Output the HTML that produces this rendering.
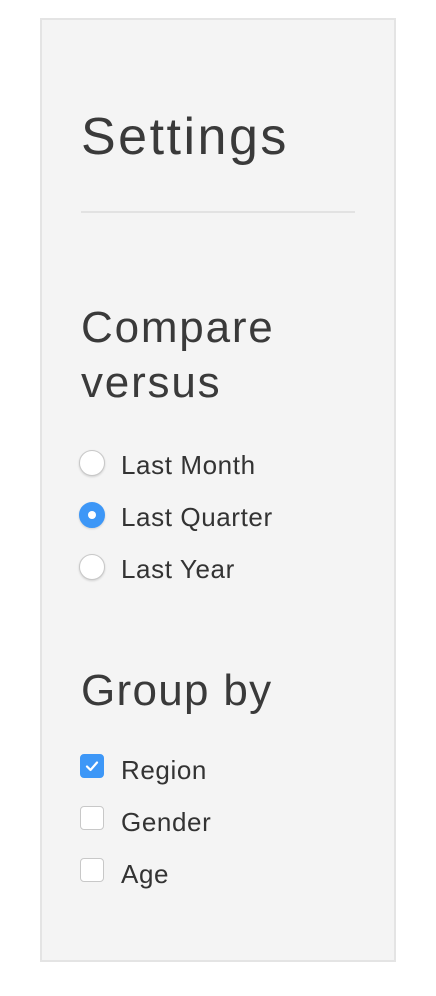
<!DOCTYPE html>
<html><head><style>
body{margin:0;width:436px;height:996px;background:#fff;font-family:"Liberation Sans",sans-serif;color:#333;position:relative;overflow:hidden}
.panel{position:absolute;left:40px;top:18px;width:352px;height:940px;background:#f4f4f4;border:2px solid #e4e4e4}
.t{position:absolute;white-space:nowrap;font-weight:300;line-height:1;color:#3a3a3a}
.hr{position:absolute;left:81px;top:211px;width:274px;height:2px;background:#e2e2e2}
.r{position:absolute;left:79px;width:24px;height:24px;border-radius:50%;background:#fff;border:1px solid #c8c8c8;box-shadow:0 1px 2px rgba(0,0,0,.15)}
.r.on{background:#3d97f7;border-color:#3d97f7}
.r.on:after{content:"";position:absolute;left:8px;top:8px;width:8px;height:8px;border-radius:50%;background:#fff}
.c{position:absolute;left:80px;width:22px;height:22px;border-radius:4px;background:#fff;border:1px solid #c8c8c8}
.c.on{background:#3d97f7;border-color:#3d97f7}
.l{position:absolute;left:121px;font-size:26px;letter-spacing:0.6px;line-height:1;color:#333;white-space:nowrap}
</style></head><body>
<div class="panel"></div>
<div class="t" style="left:81px;top:111px;font-size:52px;letter-spacing:2.5px">Settings</div>
<div class="hr"></div>
<div class="t" style="left:81px;top:306px;font-size:44px;letter-spacing:1.8px">Compare</div>
<div class="t" style="left:81px;top:361px;font-size:44px;letter-spacing:1.8px">versus</div>
<div class="r" style="top:450px"></div><div class="l" style="top:452px">Last Month</div>
<div class="r on" style="top:502px"></div><div class="l" style="top:504px">Last Quarter</div>
<div class="r" style="top:554px"></div><div class="l" style="top:556px">Last Year</div>
<div class="t" style="left:81px;top:669px;font-size:44px;letter-spacing:1.3px">Group by</div>
<div class="c on" style="top:754px"><svg width="22" height="22" viewBox="0 0 22 22"><path d="M6 11.5l3.5 3.5L16 7.5" fill="none" stroke="#fff" stroke-width="2.2" stroke-linecap="round" stroke-linejoin="round"/></svg></div><div class="l" style="top:757px">Region</div>
<div class="c" style="top:806px"></div><div class="l" style="top:809px">Gender</div>
<div class="c" style="top:858px"></div><div class="l" style="top:861px">Age</div>
</body></html>
